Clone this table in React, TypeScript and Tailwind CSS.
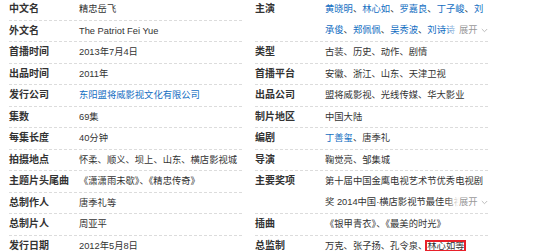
import React from "react";

const dash =
  "bg-[linear-gradient(to_right,#dcdcdc_60%,transparent_60%)] bg-[length:5px_1px] bg-repeat-x bg-bottom";

const Blue = ({ children }: { children: React.ReactNode }) => (
  <span className="text-[#136ec2]">{children}</span>
);

const Chevron = () => (
  <svg width="7" height="5" viewBox="0 0 7 5" className="ml-[3px] inline-block align-middle">
    <path d="M0.8 1 L3.5 3.7 L6.2 1" fill="none" stroke="#b5b5b5" strokeWidth="0.9" />
  </svg>
);

function Row({
  label,
  children,
  double = false,
  last = false,
}: {
  label: string;
  children: React.ReactNode;
  double?: boolean;
  last?: boolean;
}) {
  return (
    <div className={`flex ${double ? "h-[43px]" : "h-[21.5px]"} ${last ? "" : dash}`}>
      <div className="w-[70px] shrink-0 text-[10px] font-bold leading-[20.5px] text-[#333]">{label}</div>
      <div
        className={`min-w-0 flex-1 whitespace-nowrap text-[9.3px] text-[#333] ${
          double ? "leading-[21px]" : "leading-[20.5px]"
        }`}
      >
        {children}
      </div>
    </div>
  );
}

function Expand({ text }: { text: React.ReactNode }) {
  return (
    <div className="flex items-center">
      <div className="relative w-[134px] overflow-hidden">
        {text}
        <div className="absolute right-0 top-0 h-full w-[14px] bg-[linear-gradient(to_right,rgba(255,255,255,0),#fff)]" />
      </div>
      <span className="text-[#9a9a9a]">展开</span>
      <Chevron />
    </div>
  );
}

export default function App() {
  return (
    <div className="h-[251px] w-[554px] overflow-hidden bg-white font-['Liberation_Sans','Noto_Sans_CJK_SC',sans-serif]">
      <div className="-mt-[1px] ml-[9px] flex gap-[11px]">
        <div className="w-[235px]">
          <Row label="中文名">精忠岳飞</Row>
          <Row label="外文名">The Patriot Fei Yue</Row>
          <Row label="首播时间">2013年7月4日</Row>
          <Row label="出品时间">2011年</Row>
          <Row label="发行公司">
            <Blue>东阳盟将威影视文化有限公司</Blue>
          </Row>
          <Row label="集数">69集</Row>
          <Row label="每集长度">40分钟</Row>
          <Row label="拍摄地点">怀柔、顺义、坝上、山东、横店影视城</Row>
          <Row label="主题片头尾曲">《潇潇雨未歇》、《精忠传奇》</Row>
          <Row label="总制作人">唐季礼等</Row>
          <Row label="总制片人">周亚平</Row>
          <Row label="发行日期" last>
            2012年5月8日
          </Row>
        </div>
        <div className="w-[235px]">
          <Row label="主演" double>
            <div>
              <Blue>黄晓明</Blue>、<Blue>林心如</Blue>、<Blue>罗嘉良</Blue>、<Blue>丁子峻</Blue>、<Blue>刘</Blue>
            </div>
            <Expand
              text={
                <span>
                  <Blue>承俊</Blue>、<Blue>郑佩佩</Blue>、<Blue>吴秀波</Blue>、<Blue>刘诗诗</Blue>
                </span>
              }
            />
          </Row>
          <Row label="类型">古装、历史、动作、剧情</Row>
          <Row label="首播平台">安徽、浙江、山东、天津卫视</Row>
          <Row label="出品公司">盟将威影视、光线传媒、华大影业</Row>
          <Row label="制片地区">中国大陆</Row>
          <Row label="编剧">
            <Blue>丁善玺</Blue>、唐季礼
          </Row>
          <Row label="导演">鞠觉亮、邹集城</Row>
          <Row label="主要奖项" double>
            <div>第十届中国金鹰电视艺术节优秀电视剧</div>
            <Expand text={<span>奖 2014中国·横店影视节最佳电视剧</span>} />
          </Row>
          <Row label="插曲">《银甲青衣》、《最美的时光》</Row>
          <Row label="总监制" last>
            万克、张子扬、孔令泉、
            <span className="relative">
              林心如等
              <span className="absolute -left-[2px] -right-[2px] top-[-1px] bottom-[-1px] border-2 border-[#e8202a]" />
            </span>
          </Row>
        </div>
      </div>
    </div>
  );
}
